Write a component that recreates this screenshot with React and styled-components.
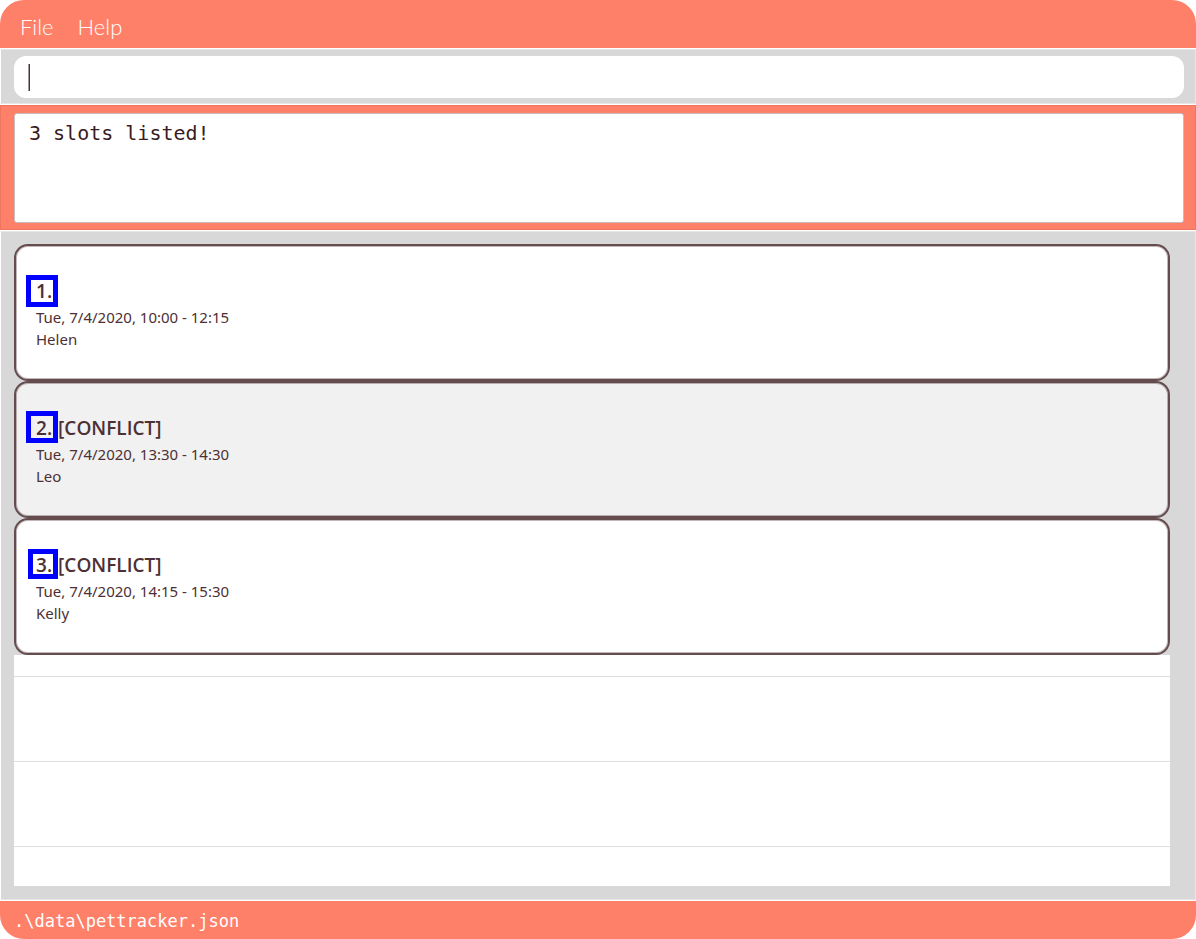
import React, { useState } from "react";
import styled, { createGlobalStyle } from "styled-components";

const coral = "#ff8069";
const ink = "#4c3035";
const grey = "#d8d8d8";
const mono = `"DejaVu Sans Mono", "Liberation Mono", monospace`;

const GlobalStyle = createGlobalStyle`
  *, *::before, *::after { box-sizing: border-box; }
  body { margin: 0; background: #fff; font-family: "Noto Sans", "Open Sans", sans-serif; color: ${ink}; }
`;

const Window = styled.div`
  display: flex;
  flex-direction: column;
  min-height: 100vh;
  border-radius: 24px;
  overflow: hidden;
  background: #fff;
`;

const MenuBar = styled.nav`
  display: flex;
  align-items: flex-end;
  gap: 24px;
  height: 48px;
  padding: 0 20px 7px;
  background: ${coral};
`;

const MenuButton = styled.button`
  padding: 0;
  border: 0;
  background: none;
  color: #fff;
  font: 300 22px/28px Lato, sans-serif;
`;

const CommandPane = styled.form`
  margin-top: 1px;
  padding: 6px 11px 5px 13px;
  border: 1px solid #e6e6e6;
  border-left-color: #fff;
  background: ${grey};
`;

const CommandField = styled.div`
  position: relative;
`;

const CommandInput = styled.input`
  display: block;
  width: 100%;
  height: 42px;
  padding: 0 14px;
  border: 0;
  border-radius: 12px;
  outline: 0;
  background: #fff;
  color: ${ink};
  caret-color: transparent;
  font: 20px ${mono};
`;

const Caret = styled.span`
  position: absolute;
  left: 14px;
  top: 8px;
  width: 2px;
  height: 27px;
  border-left: 1px solid #a5989a;
  background: ${ink};
`;

const ResultPane = styled.section`
  margin-top: 1px;
  padding: 7px 11px 6px 13px;
  border: 1px solid #ee7661;
  background: ${coral};
`;

const ResultDisplay = styled.textarea`
  display: block;
  width: 100%;
  height: 110px;
  padding: 6px 14px;
  border: 1px solid #c8bcbc;
  border-radius: 3px;
  outline: 0;
  resize: none;
  background: #fff;
  color: #3a1c22;
  font: 20px/26px ${mono};
`;

const ListPane = styled.main`
  display: flex;
  flex: 1;
  flex-direction: column;
  margin-top: 1px;
  padding: 12px 25px 13px 13px;
  border: 1px solid #e6e6e6;
  border-left-color: #fff;
  background: ${grey};
`;

const SlotList = styled.ol`
  margin: 0;
  padding: 0;
  list-style: none;
`;

const SlotCard = styled.li`
  position: relative;
  height: 137px;
  padding: 30px 20px;
  border: 2px solid #644c4f;
  border-radius: 14px;
  box-shadow: inset 0 0 0 1px rgba(100, 76, 79, 0.4);
  background: ${(p) => (p.$shaded ? "#f1f1f1" : "#fff")};
`;

const SlotTitle = styled.h2`
  display: flex;
  gap: 6px;
  margin: 0;
  font: 600 19px/30px "Open Sans", "Noto Sans", sans-serif;
`;

const SlotLine = styled.p`
  margin: 0;
  font-size: 15px;
  line-height: 22px;
`;

const Marker = styled.span`
  position: absolute;
  left: ${(p) => (p.$small ? 12 : 10)}px;
  top: ${(p) => p.$top}px;
  width: ${(p) => (p.$small ? 30 : 32)}px;
  height: ${(p) => (p.$small ? 30 : 32)}px;
  border: 5px solid #00f;
`;

const EmptyRows = styled.div`
  display: flex;
  flex: 1;
  flex-direction: column;
  background: #fff;
`;

const EmptyRow = styled.div`
  height: ${(p) => (p.$short ? 22 : 85)}px;
  border-bottom: 1px solid #dfdfdf;
`;

const StatusBar = styled.footer`
  height: 38px;
  margin-top: 1px;
  padding: 0 14px;
  background: ${coral};
  color: #fff;
  font: 17px/40px ${mono};
`;

const slots = [
  { title: "", time: "Tue, 7/4/2020, 10:00 - 12:15", pet: "Helen", top: 29 },
  { title: "[CONFLICT]", time: "Tue, 7/4/2020, 13:30 - 14:30", pet: "Leo", top: 28 },
  { title: "[CONFLICT]", time: "Tue, 7/4/2020, 14:15 - 15:30", pet: "Kelly", top: 29, small: true },
];

export default function App() {
  const [command, setCommand] = useState("");
  return (
    <>
      <GlobalStyle />
      <Window>
        <MenuBar>
          <MenuButton type="button">File</MenuButton>
          <MenuButton type="button">Help</MenuButton>
        </MenuBar>
        <CommandPane onSubmit={(e) => e.preventDefault()}>
          <CommandField>
            <CommandInput
              aria-label="Command"
              value={command}
              onChange={(e) => setCommand(e.target.value)}
            />
            {command === "" && <Caret />}
          </CommandField>
        </CommandPane>
        <ResultPane>
          <ResultDisplay aria-label="Result" readOnly value="3 slots listed!" />
        </ResultPane>
        <ListPane>
          <SlotList>
            {slots.map((slot, i) => (
              <SlotCard key={slot.time} $shaded={i % 2 === 1}>
                <Marker $top={slot.top} $small={slot.small} />
                <SlotTitle>
                  <span>{i + 1}.</span>
                  {slot.title && <span>{slot.title}</span>}
                </SlotTitle>
                <SlotLine>{slot.time}</SlotLine>
                <SlotLine>{slot.pet}</SlotLine>
              </SlotCard>
            ))}
          </SlotList>
          <EmptyRows>
            <EmptyRow $short />
            <EmptyRow />
            <EmptyRow />
          </EmptyRows>
        </ListPane>
        <StatusBar>.\data\pettracker.json</StatusBar>
      </Window>
    </>
  );
}
